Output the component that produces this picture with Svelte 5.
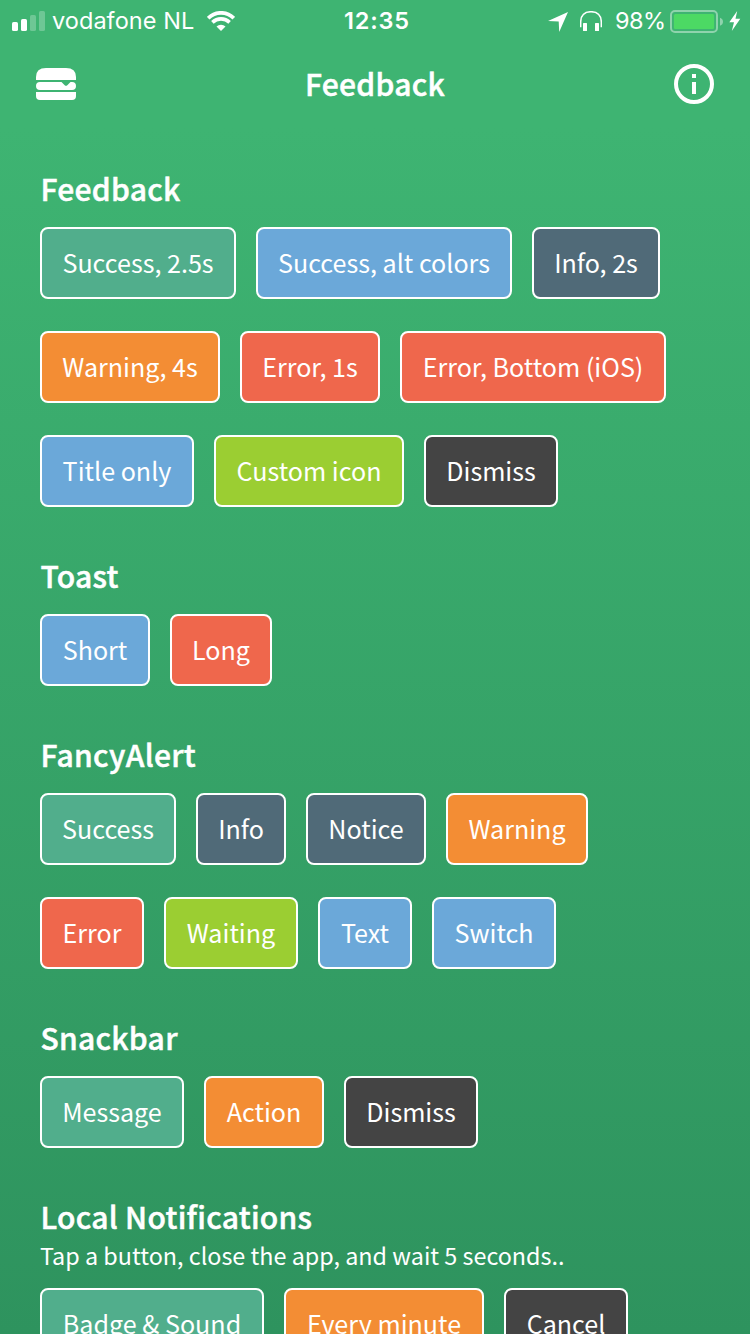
<script>
  const sections = [
    {
      title: 'Feedback',
      rows: [
        [['Success, 2.5s', 'teal', 196], ['Success, alt colors', 'blue', 256], ['Info, 2s', 'slate', 128]],
        [['Warning, 4s', 'orange', 180], ['Error, 1s', 'red', 140], ['Error, Bottom (iOS)', 'red', 266]],
        [['Title only', 'blue', 154], ['Custom icon', 'lime', 190], ['Dismiss', 'dark', 134]]
      ]
    },
    { title: 'Toast', rows: [[['Short', 'blue', 110], ['Long', 'red', 102]]] },
    {
      title: 'FancyAlert',
      rows: [
        [['Success', 'teal', 136], ['Info', 'slate', 90], ['Notice', 'slate', 120], ['Warning', 'orange', 142]],
        [['Error', 'red', 104], ['Waiting', 'lime', 134], ['Text', 'blue', 94], ['Switch', 'blue', 124]]
      ]
    },
    { title: 'Snackbar', rows: [[['Message', 'teal', 144], ['Action', 'orange', 120], ['Dismiss', 'dark', 134]]] },
    {
      title: 'Local Notifications',
      note: 'Tap a button, close the app, and wait 5 seconds..',
      rows: [[['Badge & Sound', 'teal', 224], ['Every minute', 'orange', 200], ['Cancel', 'dark', 124]]]
    }
  ];
</script>

<div class="screen">
  <div class="status">
    <div class="left">
      <svg width="34" height="22" viewBox="0 0 34 22" fill="#fff">
        <rect x="0" y="12" width="6" height="9" rx="1.6" />
        <rect x="9" y="9" width="6" height="12" rx="1.6" />
        <rect x="18" y="5" width="6" height="16" rx="1.6" opacity=".25" />
        <rect x="27" y="1" width="6" height="20" rx="1.6" opacity=".25" />
      </svg>
      <span class="carrier">vodafone NL</span>
      <svg class="wifi" width="28" height="20" viewBox="0 0 28 20" fill="none" stroke="#fff">
        <path d="M1.2 7.1A18.1 18.1 0 0 1 26.8 7.1" stroke-width="3.7" />
        <path d="M5.4 11.4A12.2 12.2 0 0 1 22.6 11.4" stroke-width="3.6" />
        <path d="M14 20L9.5 15.5A6.5 6.5 0 0 1 18.5 15.5Z" fill="#fff" stroke="none" />
      </svg>
    </div>
    <div class="time">12:35</div>
    <div class="right">
      <svg class="arrow" width="20" height="20" viewBox="0 0 20 20" fill="#fff">
        <path d="M20 0L11.2 20L10.7 9.4L0 8.9Z" />
      </svg>
      <svg class="phones" width="22" height="20" viewBox="0 0 22 20">
        <path d="M.7 16.2V11C.7 4.4 4.7 .7 11 .7S21.3 4.4 21.3 11V16.2" fill="none" stroke="#fff" stroke-width="1.5" />
        <rect x="3" y="12" width="4" height="8" rx=".5" fill="#fff" />
        <rect x="15" y="12" width="4" height="8" rx=".5" fill="#fff" />
      </svg>
      <span class="percent">98%</span>
      <svg class="battery" width="53" height="24" viewBox="0 0 53 24">
        <rect x="1" y="1" width="46" height="21" rx="4" fill="none" stroke="#fff" stroke-opacity=".42" stroke-width="2" />
        <rect x="3.9" y="3.9" width="40.2" height="15.2" rx="1.5" fill="#4cd964" />
        <path d="M50 7.8Q53 9 53 11.8T50 15.8Z" fill="#fff" fill-opacity=".42" />
      </svg>
      <svg class="bolt" width="12" height="20" viewBox="0 0 12 20" fill="#fff">
        <path d="M8.2 0L.3 11.2H5L2.8 20L11.3 7.7H6.5Z" />
      </svg>
    </div>
  </div>

  <header>
    <svg width="40" height="32" viewBox="0 0 40 32" fill="#fff">
      <path d="M0 12V9Q0 0 10 0H30Q40 0 40 9V12Z" />
      <path d="M4 14H25.5L28.7 17.2Q30 18.4 31.3 17.2L34.5 14H36A4 4 0 0 1 36 22H4A4 4 0 0 1 4 14Z" />
      <path d="M0 24H40V28Q40 32 36 32H4Q0 32 0 28Z" />
    </svg>
    <h1>Feedback</h1>
    <svg width="40" height="40" viewBox="0 0 40 40" fill="#fff">
      <circle cx="20" cy="20" r="18" fill="none" stroke="#fff" stroke-width="4" />
      <rect x="18" y="10" width="4" height="4" />
      <rect x="18" y="18" width="4" height="12" />
    </svg>
  </header>

  <main>
    {#each sections as section}
      <section>
        <h2>{section.title}</h2>
        {#if section.note}<p>{section.note}</p>{/if}
        <div class="rows">
          {#each section.rows as row}
            <div class="row">
              {#each row as [label, color, width]}
                <button class={color} style="width: {width}px">{label}</button>
              {/each}
            </div>
          {/each}
        </div>
      </section>
    {/each}
  </main>
</div>

<style>
  :global(body) {
    overflow: hidden;
  }
  .screen {
    box-sizing: border-box;
    width: 750px;
    height: 1334px;
    overflow: hidden;
    color: #fff;
    background: linear-gradient(#3eb472 0, #3eb472 128px, #2e935e 1334px);
    font-family: 'Noto Sans CJK SC', 'Open Sans', sans-serif;
  }
  svg {
    display: block;
    flex: none;
  }
  .status {
    display: grid;
    grid-template-columns: 1fr auto 1fr;
    align-items: center;
    height: 40px;
    padding: 0 9px 0 12px;
    font: 23.5px/40px Inter, sans-serif;
  }
  .left,
  .right {
    display: flex;
    align-items: center;
    height: 40px;
    white-space: nowrap;
  }
  .right {
    justify-content: flex-end;
  }
  .carrier {
    margin-left: 6px;
    width: 142px;
    padding-top: 1px;
    letter-spacing: 0.05px;
  }
  .wifi {
    margin-left: 13px;
  }
  .time {
    font-weight: 600;
    letter-spacing: 0.8px;
    padding: 1px 0 0 1px;
  }
  .arrow,
  .battery {
    margin-top: 2px;
  }
  .phones {
    margin-left: 12px;
  }
  .percent {
    margin-left: 13px;
    width: 50px;
    padding-top: 1px;
    letter-spacing: -0.5px;
  }
  .battery {
    margin-left: 5px;
  }
  .bolt {
    margin-left: 6px;
  }
  header {
    display: flex;
    align-items: center;
    justify-content: space-between;
    height: 88px;
    padding: 0 36px;
  }
  h1,
  h2,
  p {
    margin: 0;
    white-space: nowrap;
  }
  h1,
  h2 {
    font-size: 30px;
    font-weight: 500;
    letter-spacing: 0.3px;
    -webkit-text-stroke: 0.5px #fff;
  }
  h1 {
    height: 88px;
    line-height: 86px;
  }
  main {
    padding: 40px 40px 0;
  }
  section {
    padding-bottom: 48px;
  }
  h2 {
    height: 59px;
    padding-left: 0.4px;
    line-height: 40px;
  }
  p {
    height: 33px;
    margin-top: -15px;
    margin-bottom: 15px;
    font-size: 23.35px;
    line-height: 31px;
  }
  .rows {
    display: flex;
    flex-direction: column;
    gap: 32px;
  }
  .row {
    display: flex;
    gap: 20px;
  }
  button {
    flex: none;
    box-sizing: border-box;
    height: 72px;
    padding: 0 0 2px;
    border: 2px solid #fff;
    border-radius: 8px;
    color: #fff;
    font: 25.1px/66px 'Noto Sans CJK SC', 'Open Sans', sans-serif;
    white-space: nowrap;
  }
  .teal { background: #51ae8c; }
  .blue { background: #6ba8d9; }
  .slate { background: #506a78; }
  .orange { background: #f38d34; }
  .red { background: #ef674c; }
  .lime { background: #9bce32; }
  .dark { background: #444; }
</style>
